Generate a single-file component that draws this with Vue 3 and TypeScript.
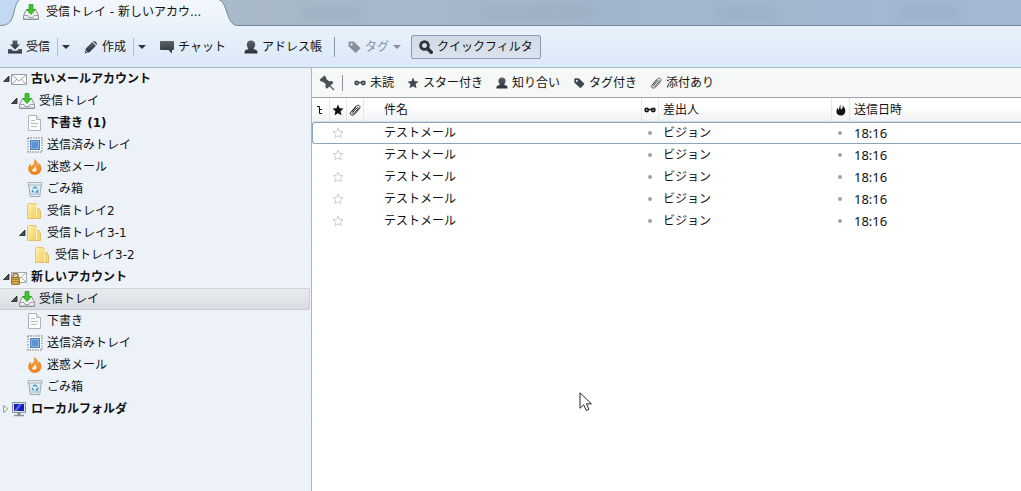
<script setup lang="ts">
import { ref } from 'vue'

interface Folder {
  id: number
  label: string
  icon: string
  level: number
  bold?: boolean
  twisty?: 'open' | 'closed'
}

interface Mail {
  id: number
  subject: string
  sender: string
  time: string
}

const folders: Folder[] = [
  { id: 1, label: '古いメールアカウント', icon: 'mail', level: 0, bold: true, twisty: 'open' },
  { id: 2, label: '受信トレイ', icon: 'inbox', level: 1, twisty: 'open' },
  { id: 3, label: '下書き (1)', icon: 'draft', level: 2, bold: true },
  { id: 4, label: '送信済みトレイ', icon: 'sent', level: 2 },
  { id: 5, label: '迷惑メール', icon: 'junk', level: 2 },
  { id: 6, label: 'ごみ箱', icon: 'trash', level: 2 },
  { id: 7, label: '受信トレイ2', icon: 'folder', level: 2 },
  { id: 8, label: '受信トレイ3-1', icon: 'folder', level: 2, twisty: 'open' },
  { id: 9, label: '受信トレイ3-2', icon: 'folder', level: 3 },
  { id: 10, label: '新しいアカウント', icon: 'secure', level: 0, bold: true, twisty: 'open' },
  { id: 11, label: '受信トレイ', icon: 'inbox', level: 1, twisty: 'open' },
  { id: 12, label: '下書き', icon: 'draft', level: 2 },
  { id: 13, label: '送信済みトレイ', icon: 'sent', level: 2 },
  { id: 14, label: '迷惑メール', icon: 'junk', level: 2 },
  { id: 15, label: 'ごみ箱', icon: 'trash', level: 2 },
  { id: 16, label: 'ローカルフォルダ', icon: 'local', level: 0, bold: true, twisty: 'closed' },
]

const filters = [
  { icon: 'glasses', label: '未読' },
  { icon: 'star', label: 'スター付き' },
  { icon: 'person', label: '知り合い' },
  { icon: 'tag', label: 'タグ付き' },
  { icon: 'clip', label: '添付あり' },
]

const mails: Mail[] = [1, 2, 3, 4, 5].map((id) => ({
  id,
  subject: 'テストメール',
  sender: 'ビジョン',
  time: '18:16',
}))

const selectedFolder = ref(11)
const focusedMail = ref(1)
</script>

<template>
  <div class="app">
    <svg class="defs" aria-hidden="true">
      <defs>
        <linearGradient id="gDark" x1="0" y1="0" x2="0" y2="1">
          <stop offset="0" stop-color="#5c6269" /><stop offset="1" stop-color="#2c3138" />
        </linearGradient>
        <linearGradient id="gFolder" x1="0" y1="0" x2="1" y2="1">
          <stop offset="0" stop-color="#fdf2b8" /><stop offset="1" stop-color="#f3cd58" />
        </linearGradient>
        <linearGradient id="gFlame" x1="0" y1="0" x2="0" y2="1">
          <stop offset="0" stop-color="#f7a640" /><stop offset="1" stop-color="#ee7d1c" />
        </linearGradient>
        <linearGradient id="gTab" x1="0" y1="0" x2="0" y2="1">
          <stop offset="0" stop-color="#f4f8fd" /><stop offset="1" stop-color="#e9f2fb" />
        </linearGradient>
        <symbol id="i-inbox" viewBox="0 0 16 16">
          <path d="M3.500 5.500h9l3 6v4h-15v-4z" fill="#eef0f2" stroke="#8d9297" />
          <path d="M1 11.500h4l1 2h4l1-2h4" fill="none" stroke="#9ca1a6" />
          <path d="M1 14.500h14" stroke="#c4c8cb" />
          <path d="M6 .5h4v5h2.500L8 10.500 3.500 5.500H6z" fill="#3fc32b" stroke="#259a1c" stroke-width=".7" />
        </symbol>
        <symbol id="i-mail" viewBox="0 0 16 16">
          <path d="M.5 3.500h15v10H.5z" fill="#fafafa" stroke="#999ea4" />
          <path d="M1 4l7 6 7-6M1 13l5-5M15 13l-5-5" fill="none" stroke="#a3a7ac" />
        </symbol>
        <symbol id="i-secure" viewBox="0 0 16 16">
          <path d="M.5 3.500h15v10H.5z" fill="#fafafa" stroke="#a3a8ae" />
          <path d="M1 4l7 6 7-6M15 13l-5-5" fill="none" stroke="#a3a7ac" />
          <path d="M2 9V7a2.500 2.500 0 0 1 5 0v2" fill="none" stroke="#9a7428" stroke-width="1.500" />
          <path d="M.7 8.500h7.600v6.800H.7z" fill="#d9ab4a" stroke="#91681c" />
          <path d="M1 10.500h7M1 12.500h7" stroke="#a87d2c" />
        </symbol>
        <symbol id="i-draft" viewBox="0 0 16 16">
          <path d="M1.500 .5h8l4 4v11h-12z" fill="#fbfbfb" stroke="#b0b2b5" />
          <path d="M9.500 .5v4h4" fill="#e8eaec" stroke="#b0b2b5" />
          <path d="M4 5.500h4M4 8.500h7M4 11.500h6" stroke="#b9bcbf" />
        </symbol>
        <symbol id="i-sent" viewBox="0 0 16 16">
          <path d="M1 1h14v14H1z" fill="#fafbfc" stroke="#84898f" stroke-width="1.300" stroke-dasharray="1.300 1.300" />
          <path d="M3 3h10v10H3z" fill="#4b83c6" />
          <path d="M4 4h8v8H4z" fill="#86b0e0" />
          <path d="M5 5h6v6H5z" fill="#5c93d3" />
        </symbol>
        <symbol id="i-junk" viewBox="0 0 16 16">
          <path d="M7.500 .5c2.500 2 3.500 4 3 6.500 1-.4 1.600-1.300 1.500-2.500 4.500 5 1.500 11-4.200 11S-.5 9.500 3.500 5c-.2 1.200 0 2 .8 2.600C6.500 6.500 8.300 4 7.500 .5z" fill="url(#gFlame)" stroke="#e08a2c" stroke-width=".7" />
          <path d="M8.500 6.500c.3 2 1.500 3 1 5-.6 1.800-3.700 2-4.300 0C4.800 9.700 8 9.500 8.500 6.500z" fill="#fff0cf" />
        </symbol>
        <symbol id="i-trash" viewBox="0 0 16 16">
          <path d="M1.500 2.500h13l-1.800 13H3.300z" fill="#dfebf5" stroke="#9aabb8" />
          <path d="M1 1.500h14v2.500H1z" fill="#e6edf2" stroke="#8fa1af" stroke-width=".7" />
          <path d="M3.500 13h9" stroke="#b3c6d4" stroke-width="1.500" />
          <path d="M6 7.500l2-1.500 2 1.500M11 8.500l-.7 2.500H8.500M6.800 11l-1.300-.5V9" fill="none" stroke="#3993cf" stroke-width="1.300" />
        </symbol>
        <symbol id="i-folder" viewBox="0 0 16 16">
          <path d="M.5 1.500l1-1h7l1 1v14h-9z" fill="url(#gFolder)" stroke="#e2bb55" stroke-width=".8" />
          <path d="M9.500 5.500h2.300l1.700 3v7h-4z" fill="#f5d772" stroke="#ddb44c" stroke-width=".8" />
          <path d="M9.500 2v13" stroke="#fdf0b8" />
        </symbol>
        <symbol id="i-local" viewBox="0 0 16 16">
          <path d="M1.500 1.500h13v10h-13z" fill="#dcdee3" stroke="#8b8f98" />
          <path d="M3 3h10v7H3z" fill="#1420b4" />
          <path d="M3 10l5-7h3L6 10z" fill="#4f65e0" />
          <path d="M6.500 12h3v2h-3z" fill="#83868e" />
          <path d="M3 14.500h10" stroke="#8e929a" stroke-width="1.500" />
        </symbol>
        <symbol id="i-download" viewBox="0 0 14 14">
          <path d="M4.500 .5h5v4H12L7 9.500 2 4.500h2.500z" fill="url(#gDark)" />
          <path d="M0 9h3.500L5 10.800h4L10.500 9H14v4.500H0z" fill="url(#gDark)" />
        </symbol>
        <symbol id="i-pencil" viewBox="0 0 14 14">
          <path d="M.8 13.200l1-4.700L8.300 2l3.700 3.700-6.500 6.500z" fill="url(#gDark)" />
          <path d="M9 1.300c1.500-1.300 5 1.800 3.700 3.700z" fill="#444a51" />
          <path d="M1.500 10.500l2 2" stroke="#dfe8f2" />
        </symbol>
        <symbol id="i-chat" viewBox="0 0 14 14">
          <path d="M1 1h12q1 0 1 1v7q0 1-1 1h-1v3.500L8.500 10H1q-1 0-1-1V2q0-1 1-1z" fill="url(#gDark)" />
        </symbol>
        <symbol id="i-person" viewBox="0 0 14 14">
          <path d="M7 .5c2.700 0 4.200 1.700 4.200 4 0 1.500-.5 2.700-1.400 3.700v1l2.200.6c1 .4 1.500 1.300 1.500 3.700H.5c0-2.400 .5-3.300 1.500-3.700l2.200-.6v-1C3.300 7.200 2.800 6 2.800 4.500c0-2.300 1.500-4 4.200-4z" fill="url(#gDark)" />
        </symbol>
        <symbol id="i-tag" viewBox="0 0 14 14">
          <path d="M1.500 2.500q0-1 1-1h4.300L13 7.500q.5.700 0 1.300L9.300 12.500q-.7.500-1.300 0L1.500 6.300z M4.500 3.200a1.200 1.200 0 1 0 .01 0z" fill="currentColor" fill-rule="evenodd" />
        </symbol>
        <symbol id="i-search" viewBox="0 0 14 14">
          <circle cx="5.500" cy="5.500" r="3.900" fill="none" stroke="#30353b" stroke-width="2.800" />
          <path d="M8.500 8.500l3.700 3.700" stroke="#30353b" stroke-width="3.600" stroke-linecap="round" />
        </symbol>
        <symbol id="i-pin" viewBox="0 0 16 16">
          <path d="M.5 4.800L5.500 .5l1.800 2-.2 1.200 3 2.500 2.700-.3 1.700 1.900-6.500 6-1.700-2 .4-2.700-3.200-2.700-1.300.3z" fill="#4a5057" />
          <path d="M10 10l5 5" stroke="#5c6269" stroke-width="1.400" />
        </symbol>
        <symbol id="i-glasses" viewBox="0 0 12 12">
          <circle cx="2.700" cy="6" r="1.700" fill="#8b9096" stroke="currentColor" stroke-width="1.500" />
          <circle cx="9.300" cy="6" r="1.700" fill="#8b9096" stroke="currentColor" stroke-width="1.500" />
          <path d="M4.500 5.500h3" stroke="currentColor" stroke-width="1.500" />
        </symbol>
        <symbol id="i-star" viewBox="0 0 12 12">
          <path d="M6 .5l1.600 3.700 4 .4-3 2.700.9 4L6 9.200l-3.500 2.100.9-4-3-2.700 4-.4z" fill="currentColor" />
        </symbol>
        <symbol id="i-star-empty" viewBox="0 0 12 12">
          <path d="M6 1l1.400 3.300 3.600.4-2.700 2.400.8 3.600L6 8.900l-3.100 1.800.8-3.600L1 4.700l3.600-.4z" fill="#fff" stroke="#cfcfcf" />
        </symbol>
        <symbol id="i-clip" viewBox="0 0 12 12">
          <path d="M4 8l4-4.200M8 3.800c1-.8 1.800.3 1.100 1.100L5.500 8.800c-1.400 1.400-3.300-.2-2-1.700L7 3M1.500 8.500L7.200 2c2-2 5 .3 3.300 2.600L5.800 10c-2.300 2.300-5.500.5-4.300-1.500z" fill="none" stroke="currentColor" stroke-width=".9" />
        </symbol>
        <symbol id="i-thread" viewBox="0 0 12 12">
          <path d="M2 2.500h2.500v7H7M4.500 5.500H7" fill="none" stroke="currentColor" />
        </symbol>
        <symbol id="i-flame" viewBox="0 0 12 12">
          <path d="M5.500 .5c-.3 2 .3 3.500.3 5 1.200-.2 2.200-1.500 1.700-3.800C11.500 4 11.500 11.500 6 11.500S.8 6 3 3.500c-.2 1.200 0 2 .6 2.500C4.500 4.500 4.300 2 5.500 .5z" fill="currentColor" />
        </symbol>
      </defs>
    </svg>

    <header class="tabstrip">
      <button class="tab" type="button" aria-current="page">
        <svg class="tab-shape" viewBox="0 0 238 26" aria-hidden="true">
          <path d="M0 26V25.500C9 25.500 12 21 14 12 15.500 5 17 1 21-1H218C223 1 225 6 227 13 230 21 232 25.500 238 25.500V26z" fill="url(#gTab)" />
          <path d="M0 25.500C9 25.500 12 21 14 12 15.500 5 17 1 21-1M218-1C223 1 225 6 227 13 230 21 232 25.500 238 25.500" fill="none" stroke="#74879c" />
        </svg>
        <span class="tab-label">
          <svg class="ic16"><use href="#i-inbox" /></svg>受信トレイ - 新しいアカウ...
        </span>
      </button>
      <div class="glass"><i class="smudge" /><i class="smudge wide" /><i class="smudge" /><i class="smudge" /></div>
    </header>

    <div class="toolbar" role="toolbar">
      <button class="tool" type="button"><svg class="ic14"><use href="#i-download" /></svg>受信</button>
      <button class="split" type="button" aria-label="受信メニュー"><i class="arrow" /></button>
      <button class="tool after-split" type="button"><svg class="ic14"><use href="#i-pencil" /></svg>作成</button>
      <button class="split" type="button" aria-label="作成メニュー"><i class="arrow" /></button>
      <button class="tool after-split" type="button"><svg class="ic14"><use href="#i-chat" /></svg>チャット</button>
      <button class="tool contacts" type="button"><svg class="ic14"><use href="#i-person" /></svg>アドレス帳</button>
      <span class="divider" />
      <button class="tool tagging" type="button" disabled>
        <svg class="ic14"><use href="#i-tag" /></svg>タグ<i class="arrow" />
      </button>
      <button class="tool quick" type="button" aria-pressed="true"><svg class="ic14"><use href="#i-search" /></svg>クイックフィルタ</button>
    </div>

    <div class="body">
      <nav class="folders" aria-label="フォルダ">
        <button
          v-for="f in folders"
          :key="f.id"
          type="button"
          class="folder"
          :class="['level-' + f.level, { bold: f.bold, selected: f.id === selectedFolder }]"
          @click="selectedFolder = f.id"
        >
          <span class="twisty">
            <svg v-if="f.twisty === 'open'" viewBox="0 0 8 8"><path d="M6 1v5.500H.5z" fill="#4c4c4c" stroke="#222" stroke-width=".8" /></svg>
            <svg v-else-if="f.twisty === 'closed'" viewBox="0 0 8 8"><path d="M.7 .5v7L4.700 4z" fill="#fff" stroke="#8f9296" /></svg>
          </span>
          <svg class="ic16"><use :href="'#i-' + f.icon" /></svg>
          <span class="name">{{ f.label }}</span>
        </button>
      </nav>

      <main class="messages">
        <div class="filterbar">
          <button class="pin" type="button" aria-label="フィルタを固定"><svg class="ic16"><use href="#i-pin" /></svg></button>
          <div class="filters">
            <button v-for="x in filters" :key="x.label" type="button" class="filter">
              <svg class="ic12"><use :href="'#i-' + x.icon" /></svg>{{ x.label }}
            </button>
          </div>
        </div>

        <table>
          <colgroup>
            <col class="c-thread" /><col class="c-icon" /><col class="c-icon" /><col />
            <col class="c-icon" /><col class="c-sender" /><col class="c-thread" /><col class="c-date" />
          </colgroup>
          <thead>
            <tr>
              <th aria-label="スレッド"><svg class="ic12"><use href="#i-thread" /></svg></th>
              <th aria-label="スター"><svg class="ic12"><use href="#i-star" /></svg></th>
              <th aria-label="添付"><svg class="ic12"><use href="#i-clip" /></svg></th>
              <th class="subject">件名</th>
              <th aria-label="未読"><svg class="ic12"><use href="#i-glasses" /></svg></th>
              <th class="text">差出人</th>
              <th aria-label="迷惑メール"><svg class="ic12"><use href="#i-flame" /></svg></th>
              <th class="text">送信日時</th>
            </tr>
          </thead>
          <tbody>
            <tr v-for="m in mails" :key="m.id" :class="{ focused: m.id === focusedMail }" @click="focusedMail = m.id">
              <td />
              <td class="mid"><button class="mark" type="button" aria-label="スター"><svg class="ic12"><use href="#i-star-empty" /></svg></button></td>
              <td />
              <td class="subject">{{ m.subject }}</td>
              <td class="mid"><i class="dot" /></td>
              <td class="text">{{ m.sender }}</td>
              <td class="mid"><i class="dot" /></td>
              <td class="text time">{{ m.time }}</td>
            </tr>
          </tbody>
        </table>

        <svg class="pointer" viewBox="0 0 14 20" aria-hidden="true">
          <path d="M1 .8v15.500l3.700-3.500 2.600 5.700 2.600-1.200-2.500-5.500h5z" fill="#fff" stroke="#22252c" />
        </svg>
      </main>
    </div>
  </div>
</template>

<style>
body {
  margin: 0;
}
</style>

<style scoped>
.app {
  display: flex;
  flex-direction: column;
  min-height: 100vh;
  font: 12px/22px "DejaVu Sans", "Noto Sans CJK JP", sans-serif;
  color: #111;
  background: #fff;
}
.defs {
  position: absolute;
  width: 0;
  height: 0;
}
button {
  margin: 0;
  padding: 0;
  border: 0;
  background: none;
  font: inherit;
  color: inherit;
  white-space: nowrap;
}
svg {
  display: block;
  flex: none;
}
.ic16 {
  width: 16px;
  height: 16px;
}
.ic14 {
  width: 14px;
  height: 14px;
}
.ic12 {
  width: 12px;
  height: 12px;
}

.tabstrip {
  display: flex;
  height: 26px;
  background: linear-gradient(90deg, #c3daf3, #a9b9ca 240px, #a2b6cb 60%, #a3b9d3);
  overflow: hidden;
}
.tab {
  display: grid;
  flex: none;
  width: 238px;
  height: 26px;
}
.tab-shape,
.tab-label {
  grid-area: 1 / 1;
}
.tab-shape {
  width: 238px;
  height: 26px;
}
.tab-label {
  display: flex;
  align-items: center;
  gap: 7px;
  height: 24px;
  padding-left: 23px;
}
.glass {
  display: flex;
  flex: 1;
  align-items: center;
  justify-content: space-around;
  border-bottom: 1px solid #74879c;
}
.smudge {
  width: 60px;
  height: 10px;
  background: #8fa2b5;
  opacity: 0.4;
  filter: blur(6px);
}
.smudge.wide {
  width: 110px;
}

.toolbar {
  display: flex;
  align-items: center;
  height: 41px;
  padding-left: 8px;
  border-bottom: 1px solid #a4bacd;
  box-sizing: content-box;
  background: linear-gradient(#e9f2fb, #dbe8f8);
}
.tool {
  display: flex;
  align-items: center;
  gap: 4px;
}
.arrow {
  border: 4px solid transparent;
  border-top-color: #30353b;
  border-bottom: 0;
}
.split {
  display: flex;
  align-items: center;
  height: 18px;
  margin-left: 7px;
  padding-left: 4px;
  border-left: 1px solid #b4bfca;
}
.after-split {
  margin-left: 14px;
}
.contacts {
  margin-left: 18px;
}
.divider {
  width: 1px;
  height: 20px;
  margin: 0 12px;
  background: #8896a5;
}
.tagging,
.tagging:disabled {
  color: #8a9199;
}
.tagging .arrow {
  border-top-color: #8a9199;
}
.quick {
  height: 24px;
  margin-left: 10px;
  padding: 0 7px;
  border: 1px solid #8b9bab;
  border-radius: 2px;
  background: linear-gradient(#cfdae5, #dbe4ee);
}

.body {
  display: flex;
  flex: 1;
}
.folders {
  flex: none;
  width: 311px;
  border-right: 1px solid #a5b8cd;
  background: #edf2f9;
}
.folder {
  display: flex;
  align-items: center;
  box-sizing: border-box;
  width: 310px;
  height: 22px;
  border-bottom: 1px solid #f1f5fb;
}
.level-0 {
  padding-left: 3px;
}
.level-1 {
  padding-left: 11px;
}
.level-2 {
  padding-left: 19px;
}
.level-3 {
  padding-left: 27px;
}
.bold {
  font-weight: bold;
}
.selected {
  border-bottom-color: #c6cace;
  border-radius: 2px;
  background: linear-gradient(#e9ecef, #dadde1);
  box-shadow: inset 0 1px #cfd3d7, inset -1px 0 #cfd3d7;
}
.twisty {
  width: 8px;
  height: 8px;
}
.twisty svg {
  width: 8px;
  height: 8px;
}
.name {
  margin-left: 4px;
}

.messages {
  position: relative;
  flex: 1;
  min-width: 0;
  background: #fff;
}
.filterbar {
  display: flex;
  align-items: center;
  height: 29px;
  padding-left: 7px;
  border-bottom: 1px solid #9da3aa;
  background: #f6f7f7;
}
.pin {
  padding-right: 7px;
  border-right: 1px solid #8f959b;
}
.filters {
  display: flex;
  gap: 13px;
  padding-left: 11px;
}
.filter {
  display: flex;
  align-items: center;
  gap: 4px;
  color: #111;
}
.filter svg {
  color: #41474e;
}

table {
  width: 100%;
  table-layout: fixed;
  border-collapse: separate;
  border-spacing: 0;
}
.c-thread {
  width: 18px;
}
.c-icon {
  width: 17px;
}
.c-sender {
  width: 173px;
}
.c-date {
  width: 171px;
}
th,
td {
  box-sizing: border-box;
  height: 22px;
  padding: 0;
  font-weight: normal;
  line-height: 20px;
  text-align: left;
  white-space: nowrap;
}
th {
  height: 24px;
  border-right: 1px solid #e3e7eb;
  border-bottom: 1px solid #d3e0ea;
  background: linear-gradient(#fff 40%, #f1f2f4);
}
th:last-child {
  border-right: 0;
}
th svg,
.mark svg {
  margin: 0 auto;
}
.subject {
  padding-left: 20px;
}
.text {
  padding-left: 4px;
}
.mid {
  padding-right: 2px;
}
.time {
  font-family: "Noto Sans", sans-serif;
  font-size: 13px;
}
.mark {
  display: block;
  width: 100%;
}
.dot {
  display: block;
  width: 4px;
  height: 4px;
  margin: 0 auto;
  border-radius: 50%;
  background: #a2a2a2;
}
.focused td {
  border-top: 1px solid #8ba5bb;
  border-bottom: 1px solid #8ba5bb;
}
.focused td:first-child {
  border-left: 1px solid #8ba5bb;
  border-radius: 3px 0 0 3px;
}
.pointer {
  position: absolute;
  left: 267px;
  top: 324px;
  width: 14px;
  height: 20px;
}
</style>
